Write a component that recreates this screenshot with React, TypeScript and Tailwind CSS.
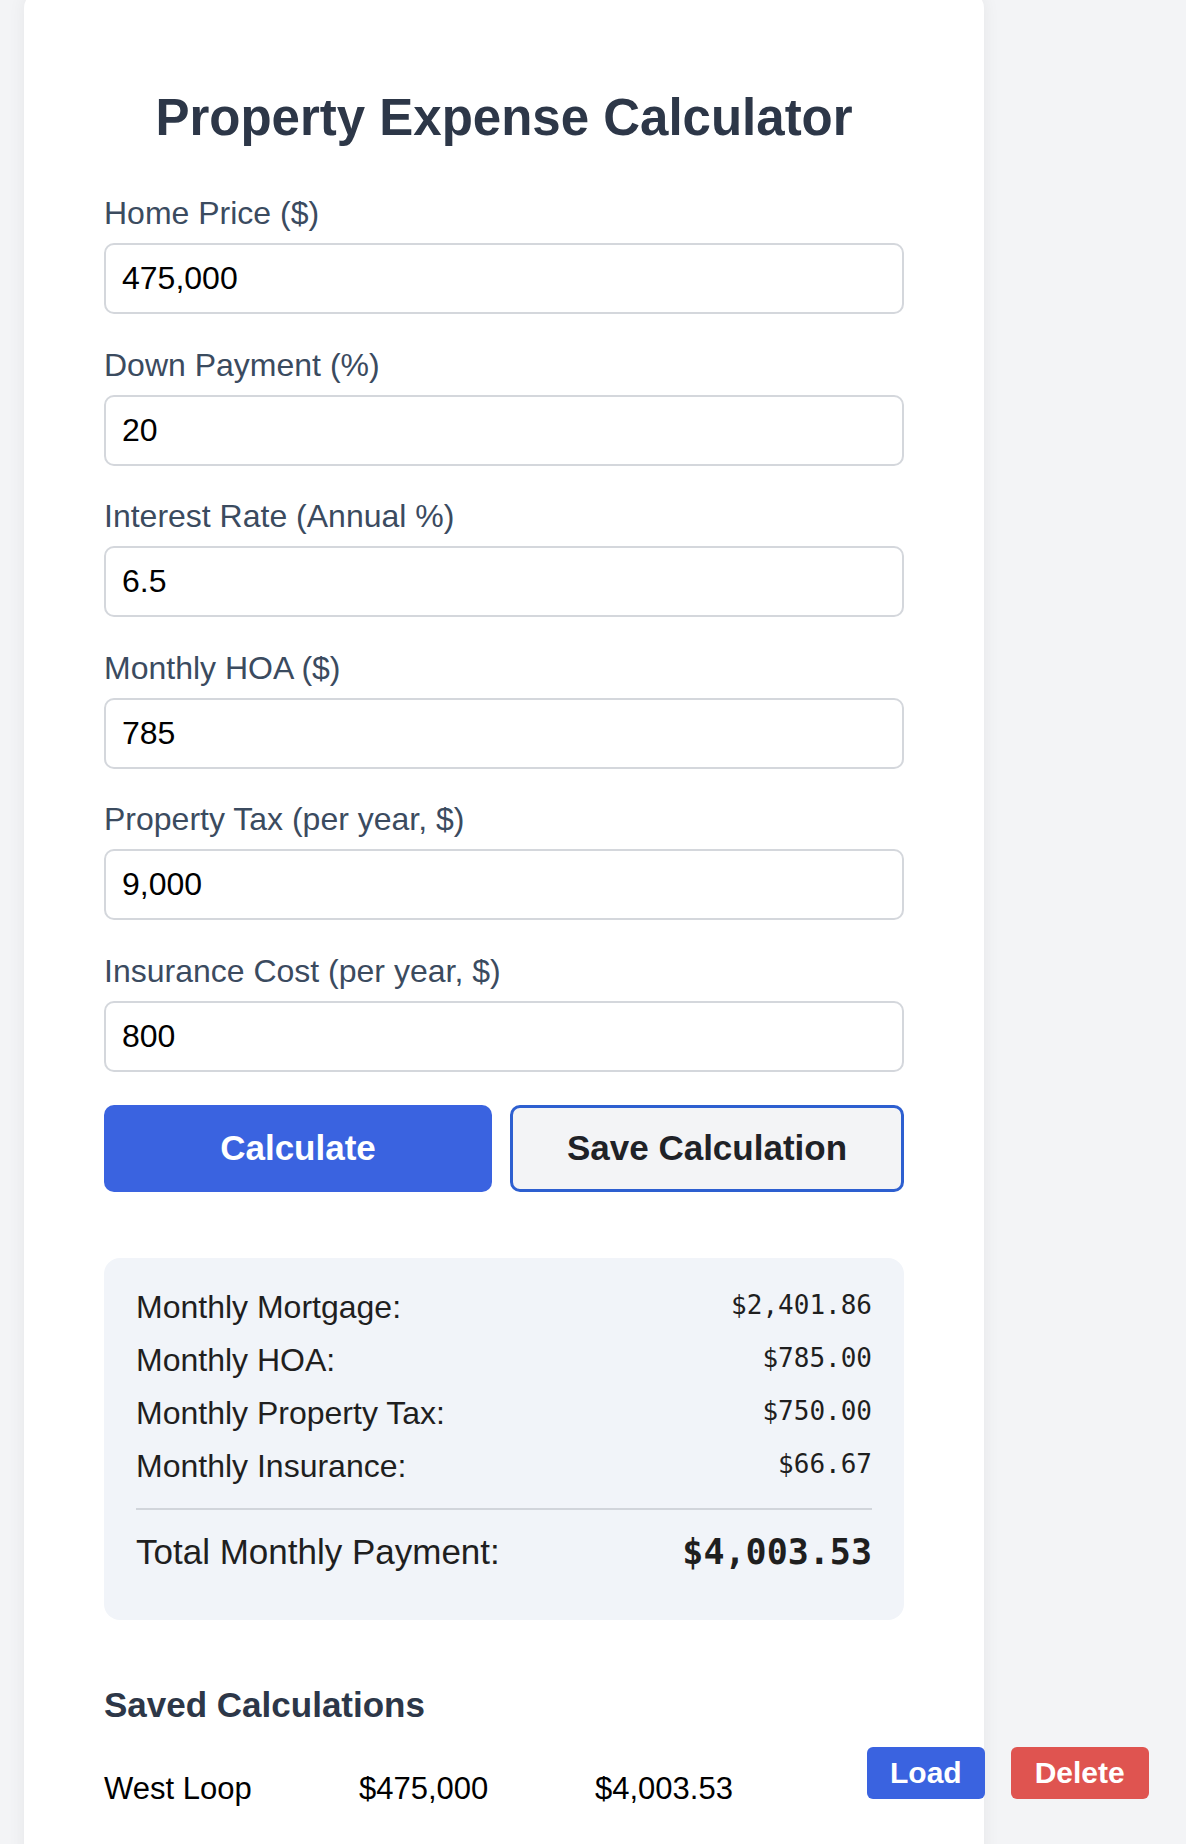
const fields = [
  { label: "Home Price ($)", value: "475,000" },
  { label: "Down Payment (%)", value: "20" },
  { label: "Interest Rate (Annual %)", value: "6.5" },
  { label: "Monthly HOA ($)", value: "785" },
  { label: "Property Tax (per year, $)", value: "9,000" },
  { label: "Insurance Cost (per year, $)", value: "800" },
];

const breakdown = [
  { label: "Monthly Mortgage:", value: "$2,401.86" },
  { label: "Monthly HOA:", value: "$785.00" },
  { label: "Monthly Property Tax:", value: "$750.00" },
  { label: "Monthly Insurance:", value: "$66.67" },
];

const sans = "font-['Liberation_Sans',Arial,sans-serif]";
const mono = "font-['DejaVu_Sans_Mono','Liberation_Mono',monospace]";

export default function App() {
  return (
    <div className={`min-h-screen bg-[#f3f4f6] pl-[24px] overflow-hidden ${sans}`}>
      <div className="w-[960px] -mt-[8px] bg-white rounded-[16px] shadow-[0_0_18px_rgba(0,0,0,0.06)] px-[80px] pt-[96px] pb-[80px]">
        <h1 className="text-center text-[51px] leading-[59px] font-bold text-[#2d3748] mb-[48px]">
          Property Expense Calculator
        </h1>

        {fields.map((f) => (
          <div key={f.label} className="mb-[32.5px]">
            <label className="block text-[32px] leading-[37px] text-[#3b4b5f] mb-[11px]">{f.label}</label>
            <input
              defaultValue={f.value}
              className={`w-full h-[71px] px-[16px] border-2 border-[#d4d7dc] rounded-[10px] text-[32px] text-black bg-white outline-none ${sans}`}
            />
          </div>
        ))}

        <div className="flex gap-[18px] mt-[33px]">
          <button className="flex-1 h-[87px] rounded-[10px] bg-[#3a63e0] text-white text-[35px] font-bold">
            Calculate
          </button>
          <button className="flex-1 h-[87px] rounded-[10px] bg-[#f3f4f6] border-[3px] border-[#2d5fd0] text-[#1f2227] text-[35px] font-bold">
            Save Calculation
          </button>
        </div>

        <div className="mt-[66px] bg-[#f1f4f9] rounded-[16px] px-[32px] pt-[23px] pb-[38px] text-[#1f1f1f]">
          {breakdown.map((r) => (
            <div key={r.label} className="h-[53px] flex items-center justify-between">
              <span className="text-[32px] leading-[37px]">{r.label}</span>
              <span className={`${mono} text-[26px] leading-[37px] -mt-[4px]`}>{r.value}</span>
            </div>
          ))}
          <div className="mt-[15px] h-[2px] bg-[#d1d5db]" />
          <div className="mt-[12px] h-[60px] flex items-center justify-between">
            <span className="text-[35px] leading-[40px]">Total Monthly Payment:</span>
            <span className={`${mono} text-[35px] leading-[40px] font-bold`}>$4,003.53</span>
          </div>
        </div>

        <h2 className="mt-[65px] text-[35px] leading-[40px] font-bold text-[#2d3748]">Saved Calculations</h2>

        <div className="mt-[22px] flex items-start whitespace-nowrap">
          <span className="w-[255px] shrink-0 pt-[24px] text-[31px] leading-[36px] text-black">West Loop</span>
          <span className="w-[236px] shrink-0 pt-[24px] text-[31px] leading-[36px] text-black">$475,000</span>
          <span className="w-[272px] shrink-0 pt-[24px] text-[31px] leading-[36px] text-black">$4,003.53</span>
          <div className="flex gap-[26px] shrink-0">
            <button className="h-[52px] px-[23px] rounded-[6px] bg-[#3a63e0] text-white text-[30px] font-bold">Load</button>
            <button className="h-[52px] px-[24px] rounded-[6px] bg-[#df5450] text-white text-[30px] font-bold">Delete</button>
          </div>
        </div>
      </div>
    </div>
  );
}
